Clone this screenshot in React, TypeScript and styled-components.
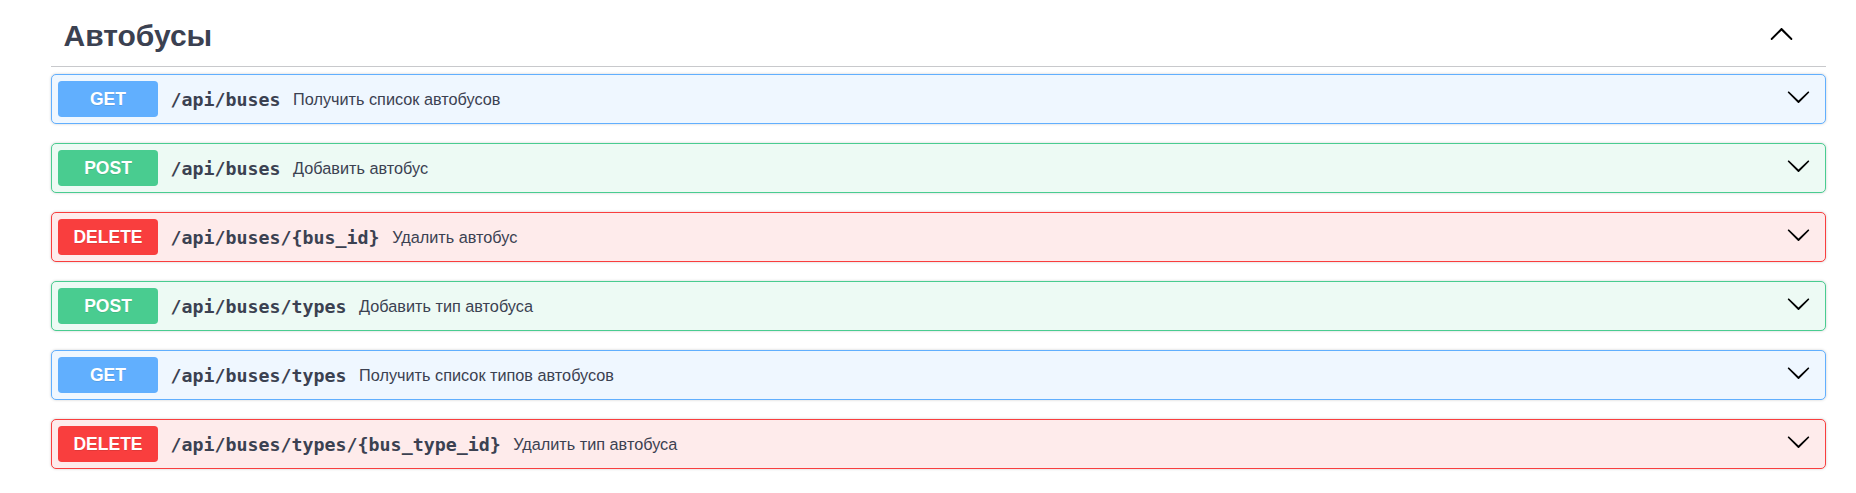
import React from "react";
import styled, { createGlobalStyle, css } from "styled-components";

type Method = "GET" | "POST" | "DELETE";

const palette: Record<Method, { main: string; bg: string }> = {
  GET: { main: "#61affe", bg: "#eff7ff" },
  POST: { main: "#49cc90", bg: "#edfaf4" },
  DELETE: { main: "#f93e3e", bg: "#feebeb" },
};

const Global = createGlobalStyle`
  html, body { margin: 0; padding: 0; background: #fff; }
  body { font-family: "Liberation Sans", Arial, sans-serif; color: #3b4151; }
`;

const Page = styled.div`
  padding: 0 0 0 51px;
`;

const Section = styled.section`
  width: 1775px;
`;

const TagHeader = styled.h3`
  box-sizing: border-box;
  height: 67px;
  margin: 0 0 7px;
  padding: 5px 0 0 12.5px;
  display: flex;
  align-items: center;
  border-bottom: 1px solid #c8c9cc;
  font-family: "Liberation Sans", Arial, sans-serif;
  font-size: 30px;
  font-weight: 700;
  color: #3b4151;
`;

const TagTitle = styled.span`
  flex: 1;
`;

const ArrowButton = styled.button<{ $top: number; $right: number }>`
  border: none;
  background: none;
  padding: 0;
  display: flex;
  align-self: flex-start;
  margin-top: ${(p) => p.$top}px;
  margin-right: ${(p) => p.$right}px;
  cursor: pointer;
  svg {
    width: 25px;
    height: 25px;
    fill: #000;
  }
`;

const Operation = styled.div<{ $method: Method }>`
  box-sizing: border-box;
  height: 50px;
  margin: 0 0 19px;
  padding: 6px;
  display: flex;
  align-items: center;
  border-radius: 5px;
  box-shadow: 0 0 3px rgba(0, 0, 0, 0.19);
  ${(p) => css`
    border: 1px solid ${palette[p.$method].main};
    background: ${palette[p.$method].bg};
  `}
`;

const MethodBadge = styled.span<{ $method: Method }>`
  box-sizing: border-box;
  min-width: 100px;
  height: 36px;
  padding: 7.5px 0;
  line-height: 21px;
  border-radius: 3.75px;
  text-align: center;
  font-family: "Liberation Sans", Arial, sans-serif;
  font-size: 17.5px;
  font-weight: 700;
  color: #fff;
  text-shadow: 0 1px 0 rgba(0, 0, 0, 0.1);
  background: ${(p) => palette[p.$method].main};
`;

const Path = styled.span`
  padding: 0 12.5px;
  font-family: "DejaVu Sans Mono", monospace;
  font-size: 18.3px;
  font-weight: 700;
  color: #3b4151;
  white-space: nowrap;
`;

const Description = styled.span`
  flex: 1;
  font-family: "Liberation Sans", Arial, sans-serif;
  font-size: 16.25px;
  color: #3b4151;
`;

const ArrowUp = () => (
  <svg viewBox="0 0 20 20" aria-hidden="true">
    <path d="M17.418 14.908c.287.294.752.294 1.039 0 .287-.295.287-.771 0-1.065l-7.916-8.047c-.287-.295-.752-.295-1.039 0l-7.916 8.047c-.287.294-.287.77 0 1.065.287.294.752.294 1.039 0l7.398-7.201 7.395 7.201z" />
  </svg>
);

const ArrowDown = () => (
  <svg viewBox="0 0 20 20" aria-hidden="true">
    <path d="M17.418 6.109c.272-.268.709-.268.979 0s.271.701 0 .969l-7.908 7.83c-.27.268-.707.268-.979 0l-7.908-7.83c-.27-.268-.27-.701 0-.969.271-.268.709-.268.979 0L10 13.25l7.418-7.141z" />
  </svg>
);

const ops: { method: Method; path: string; desc: string }[] = [
  { method: "GET", path: "/api/buses", desc: "Получить список автобусов" },
  { method: "POST", path: "/api/buses", desc: "Добавить автобус" },
  { method: "DELETE", path: "/api/buses/{bus_id}", desc: "Удалить автобус" },
  { method: "POST", path: "/api/buses/types", desc: "Добавить тип автобуса" },
  { method: "GET", path: "/api/buses/types", desc: "Получить список типов автобусов" },
  { method: "DELETE", path: "/api/buses/types/{bus_type_id}", desc: "Удалить тип автобуса" },
];

export default function App() {
  return (
    <>
      <Global />
      <Page>
        <Section>
          <TagHeader>
            <TagTitle>Автобусы</TagTitle>
            <ArrowButton $top={16} $right={32}>
              <ArrowUp />
            </ArrowButton>
          </TagHeader>
          {ops.map((op, i) => (
            <Operation key={i} $method={op.method}>
              <MethodBadge $method={op.method}>{op.method}</MethodBadge>
              <Path>{op.path}</Path>
              <Description>{op.desc}</Description>
              <ArrowButton $top={3} $right={8}>
                <ArrowDown />
              </ArrowButton>
            </Operation>
          ))}
        </Section>
      </Page>
    </>
  );
}
